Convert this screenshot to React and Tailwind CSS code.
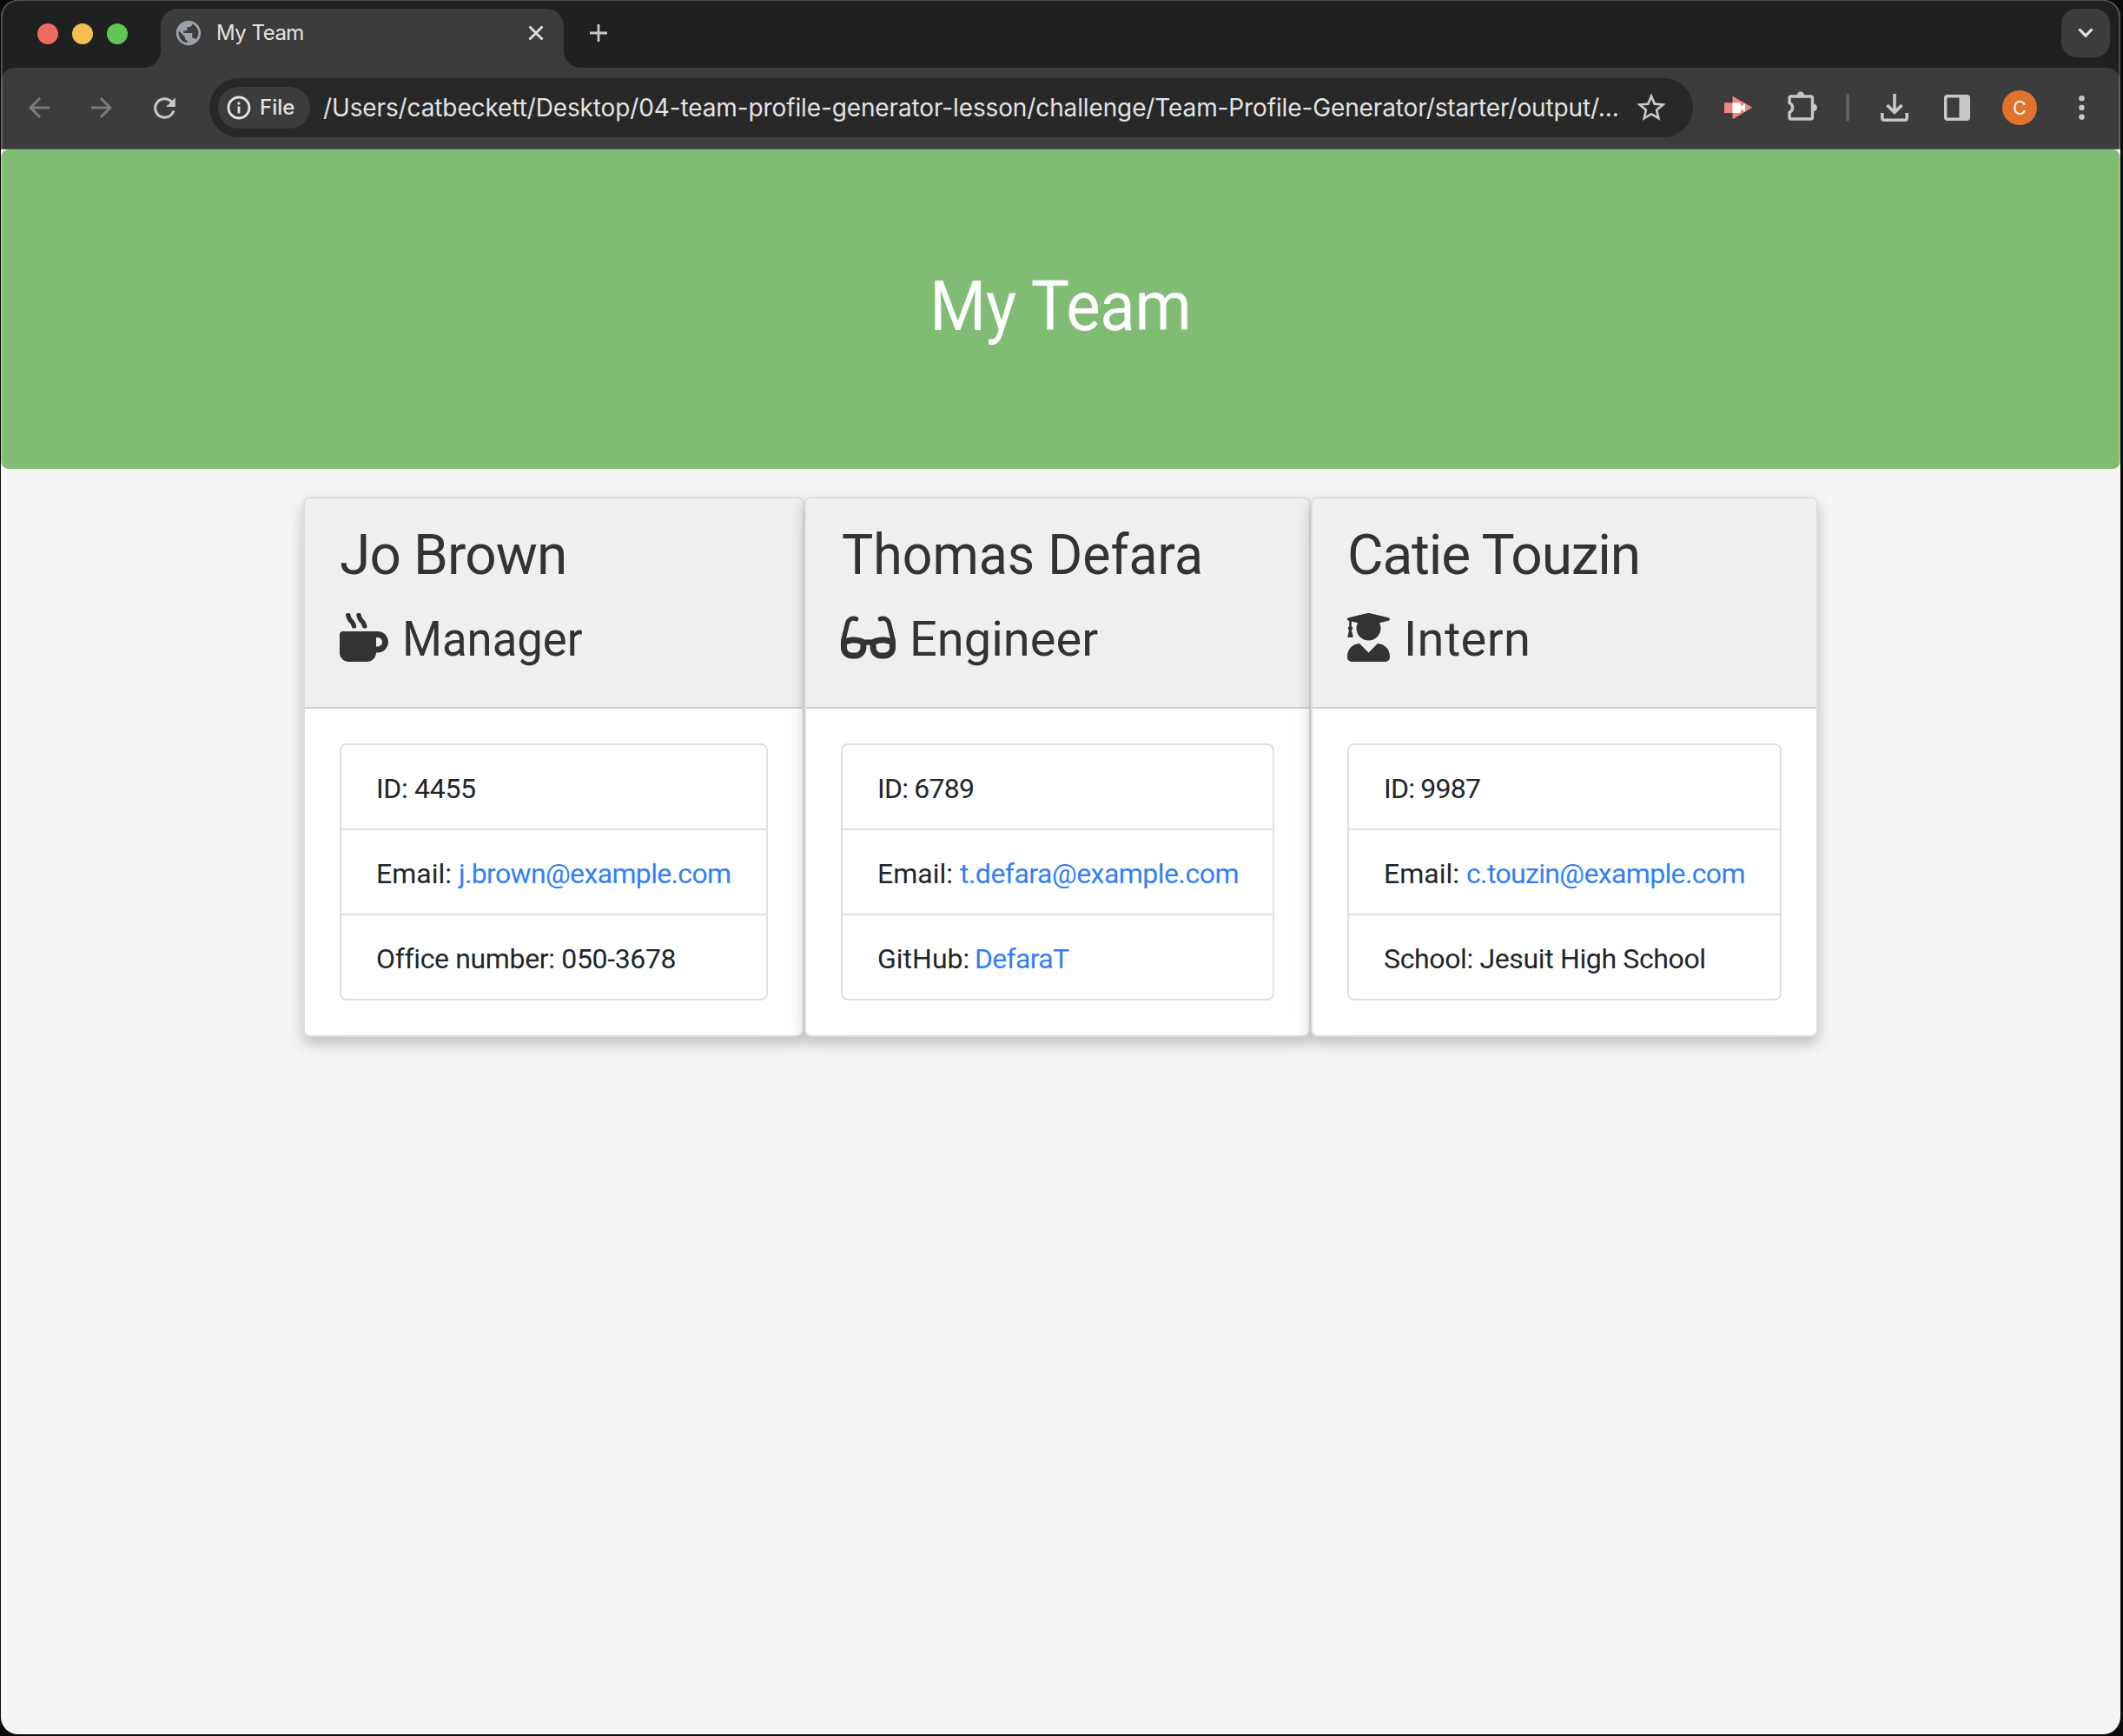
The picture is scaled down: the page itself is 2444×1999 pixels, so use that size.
import React from "react";
import { FaMugHot, FaGlasses, FaUserGraduate } from "react-icons/fa";
import { MdArrowBack, MdArrowForward, MdRefresh, MdStarOutline, MdPublic } from "react-icons/md";

const team = [
  {
    name: "Jo Brown",
    nameClass: "tracking-[-0.89px]",
    role: "Manager",
    roleClass: "origin-left scale-x-[0.94]",
    Icon: FaMugHot,
    iconClass: "w-14",
    width: "w-[577px]",
    rows: [
      { text: "ID: 4455", textClass: "tracking-[-0.33px]" },
      { label: "Email:", labelClass: "w-[95px]", link: "j.brown@example.com", linkClass: "tracking-[-0.65px]" },
      { text: "Office number: 050-3678", textClass: "tracking-[-0.35px]" },
    ],
  },
  {
    name: "Thomas Defara",
    nameClass: "origin-left scale-x-[0.95] pl-px",
    role: "Engineer",
    roleClass: "",
    Icon: FaGlasses,
    iconClass: "w-[63px]",
    width: "w-[583px]",
    rows: [
      { text: "ID: 6789", textClass: "tracking-[-0.76px]" },
      { label: "Email:", labelClass: "w-[95px]", link: "t.defara@example.com", linkClass: "tracking-[-0.52px]" },
      { label: "GitHub:", labelClass: "w-28", link: "DefaraT", linkClass: "tracking-[-0.69px]" },
    ],
  },
  {
    name: "Catie Touzin",
    nameClass: "tracking-[-1.18px]",
    role: "Intern",
    roleClass: "tracking-[0.37px]",
    Icon: FaUserGraduate,
    iconClass: "w-[49px]",
    width: "w-[584px]",
    rows: [
      { text: "ID: 9987", textClass: "tracking-[-0.76px]" },
      { label: "Email:", labelClass: "w-[95px]", link: "c.touzin@example.com", linkClass: "tracking-[-0.65px]" },
      { text: "School: Jesuit High School", textClass: "tracking-[-0.36px]" },
    ],
  },
];

function TabStrip() {
  return (
    <div className="flex h-[78px] items-end bg-[#1f2120]">
      <div className="flex h-[78px] items-center gap-4 pl-[42px]">
        <span className="size-6 rounded-full bg-[#ed6a5f]" />
        <span className="size-6 rounded-full bg-[#f6be50]" />
        <span className="size-6 rounded-full bg-[#61c555]" />
      </div>
      <svg className="ml-[18px] size-5 shrink-0" viewBox="0 0 20 20">
        <path d="M20 0v20H0A20 20 0 0 0 20 0z" fill="#3c3c3c" />
      </svg>
      <div className="flex h-[68px] w-[464px] items-center rounded-t-[20px] bg-[#3c3c3c] pr-[22px] pb-3 pl-[15px]">
        <MdPublic className="size-[34px] text-[#9aa0a8]" />
        <span className="ml-[15px] text-2xl tracking-[-0.5px] text-[#e3e3e3]">My Team</span>
        <svg className="ml-auto size-5" viewBox="0 0 20 20" stroke="#e3e3e3" strokeWidth="2.8">
          <path d="M2.5 2.5l15 15M17.5 2.5l-15 15" />
        </svg>
      </div>
      <svg className="size-5 shrink-0" viewBox="0 0 20 20">
        <path d="M0 0v20H20A20 20 0 0 1 0 0z" fill="#3c3c3c" />
      </svg>
      <svg className="mb-[30px] ml-[10px] size-5" viewBox="0 0 20 20" stroke="#c7c7c7" strokeWidth="2.8">
        <path d="M10 0v20M0 10h20" />
      </svg>
      <button className="mr-[12px] mb-3 ml-auto flex size-14 items-center justify-center rounded-[18px] bg-[#3c3c3c]">
        <svg className="h-3 w-[18px]" viewBox="0 0 18 12" fill="none" stroke="#e3e3e3" strokeWidth="3.2">
          <path d="M1.5 1.5L9 9.2l7.500-7.700" />
        </svg>
      </button>
    </div>
  );
}

function Toolbar() {
  return (
    <div className="bg-[#1f2120]">
      <div className="flex h-[94px] items-center rounded-t-2xl border-b-2 border-[#474747] bg-[#3c3c3c] text-[#c7c7c7]">
        <MdArrowBack className="ml-[26px] size-9 text-[#7b7b7b]" />
        <MdArrowForward className="ml-9 size-9 text-[#7b7b7b]" />
        <MdRefresh className="ml-9 size-[37px]" />
        <div className="ml-[33px] flex h-[68px] w-[1708px] items-center rounded-full bg-[#282828] pl-[10px]">
          <div className="flex h-12 w-[106px] items-center rounded-full bg-[#3c3c3c] pl-[10px]">
            <svg className="size-7" viewBox="0 0 28 28" fill="none" stroke="#e3e3e3" strokeWidth="2.800">
              <circle cx="14" cy="14" r="12" />
              <path d="M14 12.500v8M14 7.500v3" />
            </svg>
            <span className="ml-[10px] text-2xl font-medium text-[#e3e3e3]">File</span>
          </div>
          <span className="ml-[15px] text-[28px] tracking-[-0.123px] whitespace-nowrap text-[#e3e3e3]">
            /Users/catbeckett/Desktop/04-team-profile-generator-lesson/challenge/Team-Profile-Generator/starter/output/...
          </span>
          <MdStarOutline className="mr-7 ml-auto size-10" />
        </div>
        <svg className="ml-[36px] h-8 w-8 shrink-0" viewBox="0 0 32 32">
          <path d="M0 10.200h9.500V3.800Q9.500 2.600 10.600 3.200L31.400 15.200Q32 15.700 31.400 16.300L10.600 28.700Q9.500 29.300 9.500 28.200V22H0z" fill="#ee8680" />
          <path d="M9.500 10.200V22H17a2.200 2.200 0 0 0 2.200-2.200v-7.400a2.200 2.200 0 0 0-2.200-2.200z" fill="#fff" />
          <path d="M18 16l6-5v10z" fill="#fff" />
        </svg>
        <svg className="mb-1 ml-[41px] h-10 w-[34px] shrink-0" viewBox="0 0 34 40" fill="none" stroke="#c7c7c7" strokeWidth="3.400">
          <path d="M2 11Q2 9 4 9H26.500Q28.500 9 28.500 11V33Q28.500 35 26.500 35H4Q2 35 2 33V27.500A6 6 0 0 0 2 16.500z" strokeLinejoin="round" />
          <path d="M10.500 8a4.400 4.400 0 0 1 8.800 0zM29.500 17.500a4.400 4.400 0 0 1 0 8.800z" fill="#c7c7c7" stroke="none" />
        </svg>
        <span className="ml-[33px] h-8 w-1 shrink-0 rounded-full bg-[#5f5f5f]" />
        <svg className="ml-9 size-8 shrink-0" viewBox="0 0 32 32" fill="none" stroke="#c7c7c7" strokeWidth="3.600">
          <path d="M16 0v21M7.500 13l8.500 8.500 8.500-8.500" />
          <path d="M1.800 22v5.500q0 2.700 2.700 2.700h23q2.700 0 2.700-2.700V22" />
        </svg>
        <svg className="ml-[41px] h-[30px] w-[30px] shrink-0" viewBox="0 0 30 30">
          <rect x="1.700" y="1.700" width="26.600" height="26.600" rx="2" fill="none" stroke="#c7c7c7" strokeWidth="3.400" />
          <rect x="17.500" y="2" width="11" height="26" fill="#c7c7c7" />
        </svg>
        <span className="ml-[37px] flex size-10 shrink-0 items-center justify-center rounded-full bg-[#df732d] text-[21px] leading-none text-white">
          C
        </span>
        <svg className="ml-[48px] h-7 w-[7px] shrink-0" viewBox="0 0 7 28" fill="#c7c7c7">
          <circle cx="3.500" cy="3.200" r="3.200" />
          <circle cx="3.500" cy="14" r="3.200" />
          <circle cx="3.500" cy="24.800" r="3.200" />
        </svg>
      </div>
    </div>
  );
}

function Card({ person }) {
  const { Icon } = person;
  return (
    <article
      className={`${person.width} overflow-hidden rounded-lg border-2 border-[#dedede] bg-white shadow-[0_8px_16px_rgba(0,0,0,0.2),0_8px_40px_rgba(0,0,0,0.03)]`}
    >
      <header className="h-[242px] border-b-2 border-[#cfcfcf] bg-[#efefef] px-10 pt-6 text-[#333333]">
        <h2 className="flex text-[64px] leading-[83px] whitespace-nowrap">
          <span className={person.nameClass}>{person.name}</span>
        </h2>
        <h3 className="mt-[21px] flex h-[68px] items-center gap-4 text-[56px] leading-[68px]">
          <Icon className={`${person.iconClass} mb-1 h-14 shrink-0`} />
          <span className={person.roleClass}>{person.role}</span>
        </h3>
      </header>
      <div className="p-10">
        <ul className="rounded-lg border-2 border-[#dfdfdf]">
          {person.rows.map((row, i) => (
            <li
              key={i}
              className="flex h-[98px] items-center border-b-2 border-[#dfdfdf] pt-1 pl-10 text-[32px] whitespace-nowrap text-[#212529] last:h-24 last:border-b-0"
            >
              {row.text ? (
                <span className={row.textClass}>{row.text}</span>
              ) : (
                <>
                  <span className={row.labelClass}>{row.label}</span>
                  <a className={`${row.linkClass} text-[#317ff6]`}>{row.link}</a>
                </>
              )}
            </li>
          ))}
        </ul>
      </div>
    </article>
  );
}

export default function App() {
  return (
    <div className="h-[1999px] w-[2444px] overflow-hidden bg-[#0b0b0b] pl-px">
      <div className="relative flex h-[1997px] w-[2440px] flex-col overflow-hidden rounded-[20px] bg-[#f5f5f5] font-['Inter',sans-serif]">
        <TabStrip />
        <Toolbar />
        <main className="flex-1 font-['Roboto',sans-serif]">
          <div className="flex h-[368px] items-center justify-center rounded-[9px] bg-[#80bc73] pb-[7px]">
            <h1 className="scale-x-[0.93] text-[80px] leading-none tracking-[-0.3px] whitespace-nowrap text-white">My Team</h1>
          </div>
          <div className="mt-8 ml-[348px] flex">
            {team.map((person) => (
              <Card key={person.name} person={person} />
            ))}
          </div>
        </main>
        <div className="pointer-events-none absolute inset-0 rounded-[20px] border-x-2 border-t border-white/20" />
      </div>
    </div>
  );
}
